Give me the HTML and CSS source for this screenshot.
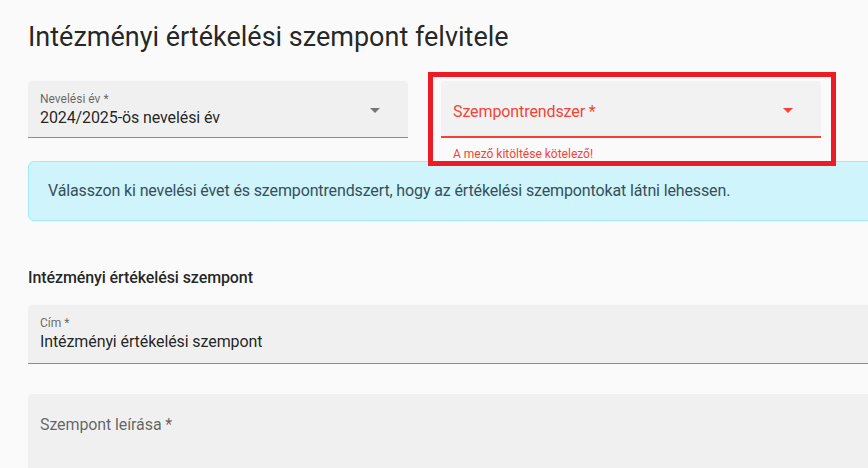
FILE: index.html
```html
<!DOCTYPE html>
<html lang="hu">
<head>
<meta charset="utf-8">
<title>Intézményi értékelési szempont felvitele</title>
<link rel="stylesheet" href="styles.css">
</head>
<body>
<div class="page">
  <h1 class="title">Intézményi értékelési szempont felvitele</h1>

  <div class="row">
    <div class="col">
      <div class="field">
        <span class="label-small">Nevelési év *</span>
        <span class="value">2024/2025-ös nevelési év</span>
        <svg class="arrow" width="24" height="24" viewBox="0 0 24 24"><path d="M7 10l5 5 5-5z" fill="#757575"/></svg>
      </div>
    </div>
    <div class="col">
      <div class="field error">
        <span class="label-big">Szempontrendszer *</span>
        <svg class="arrow" width="24" height="24" viewBox="0 0 24 24"><path d="M7 10l5 5 5-5z" fill="#f44336"/></svg>
      </div>
      <div class="helper">A mező kitöltése kötelező!</div>
    </div>
    <div class="col"></div>
    <div class="highlight"></div>
  </div>

  <div class="alert">Válasszon ki nevelési évet és szempontrendszert, hogy az értékelési szempontokat látni lehessen.</div>

  <h2 class="section">Intézményi értékelési szempont</h2>

  <div class="field wide">
    <span class="label-small">Cím *</span>
    <span class="value">Intézményi értékelési szempont</span>
  </div>

  <div class="field wide tall">
    <span class="label-big muted">Szempont leírása *</span>
  </div>
</div>
</body>
</html>
```

FILE: styles.css
```css
html, body {
  margin: 0;
  padding: 0;
  overflow: hidden;
  background: #fafafa;
}
body {
  font-family: Roboto, "Noto Sans", "Liberation Sans", sans-serif;
  color: rgba(0, 0, 0, 0.87);
}
.page {
  width: 1234px;
  padding: 0 0 0 28px;
}
.title {
  margin: 0;
  padding-top: 18px;
  font-size: 27px;
  font-weight: 400;
  line-height: 38px;
  height: 63px;
  letter-spacing: 0;
}
.row {
  position: relative;
  display: flex;
  gap: 33px;
  height: 80px;
}
.col {
  width: 380px;
  flex: none;
}
.field {
  position: relative;
  height: 57px;
  box-sizing: border-box;
  background: #f0f0f0;
  border-radius: 4px 4px 0 0;
  border-bottom: 1px solid #8c8c8c;
}
.field.error {
  background: #f2f2f2;
  border-bottom: 2px solid #f44336;
}
.label-small {
  position: absolute;
  left: 12px;
  top: 11px;
  font-size: 12px;
  line-height: 14px;
  color: rgba(0, 0, 0, 0.6);
}
.value {
  position: absolute;
  left: 12px;
  top: 25px;
  font-size: 16px;
  line-height: 23px;
  letter-spacing: -0.1px;
  color: rgba(0, 0, 0, 0.87);
}
.label-big {
  position: absolute;
  left: 12px;
  top: 19px;
  font-size: 16px;
  line-height: 23px;
  letter-spacing: -0.1px;
  color: #f44336;
}
.label-big.muted {
  color: rgba(0, 0, 0, 0.6);
}
.arrow {
  position: absolute;
  right: 21px;
  top: 17px;
}
.helper {
  margin: 8px 0 0 12px;
  font-size: 12px;
  line-height: 16px;
  color: #f44336;
}
.highlight {
  position: absolute;
  left: 400px;
  top: -9px;
  width: 408px;
  height: 94px;
  box-sizing: border-box;
  border: 5px solid #ed1c24;
  z-index: 2;
}
.alert {
  position: relative;
  z-index: 1;
  box-sizing: border-box;
  height: 60px;
  padding: 17px 19px;
  background: #cff4fc;
  border: 1px solid #9eeaf9;
  border-radius: 6px;
  font-size: 16px;
  line-height: 24px;
  letter-spacing: -0.13px;
  color: #34505a;
}
.section {
  margin: 45px 0 0;
  font-size: 16px;
  font-weight: 500;
  line-height: 24px;
  height: 24px;
  letter-spacing: -0.1px;
}
.field.wide {
  margin-top: 15px;
  width: 100%;
  height: 59px;
}
.field.tall {
  margin-top: 30px;
  height: 120px;
  border-bottom: none;
}
```
